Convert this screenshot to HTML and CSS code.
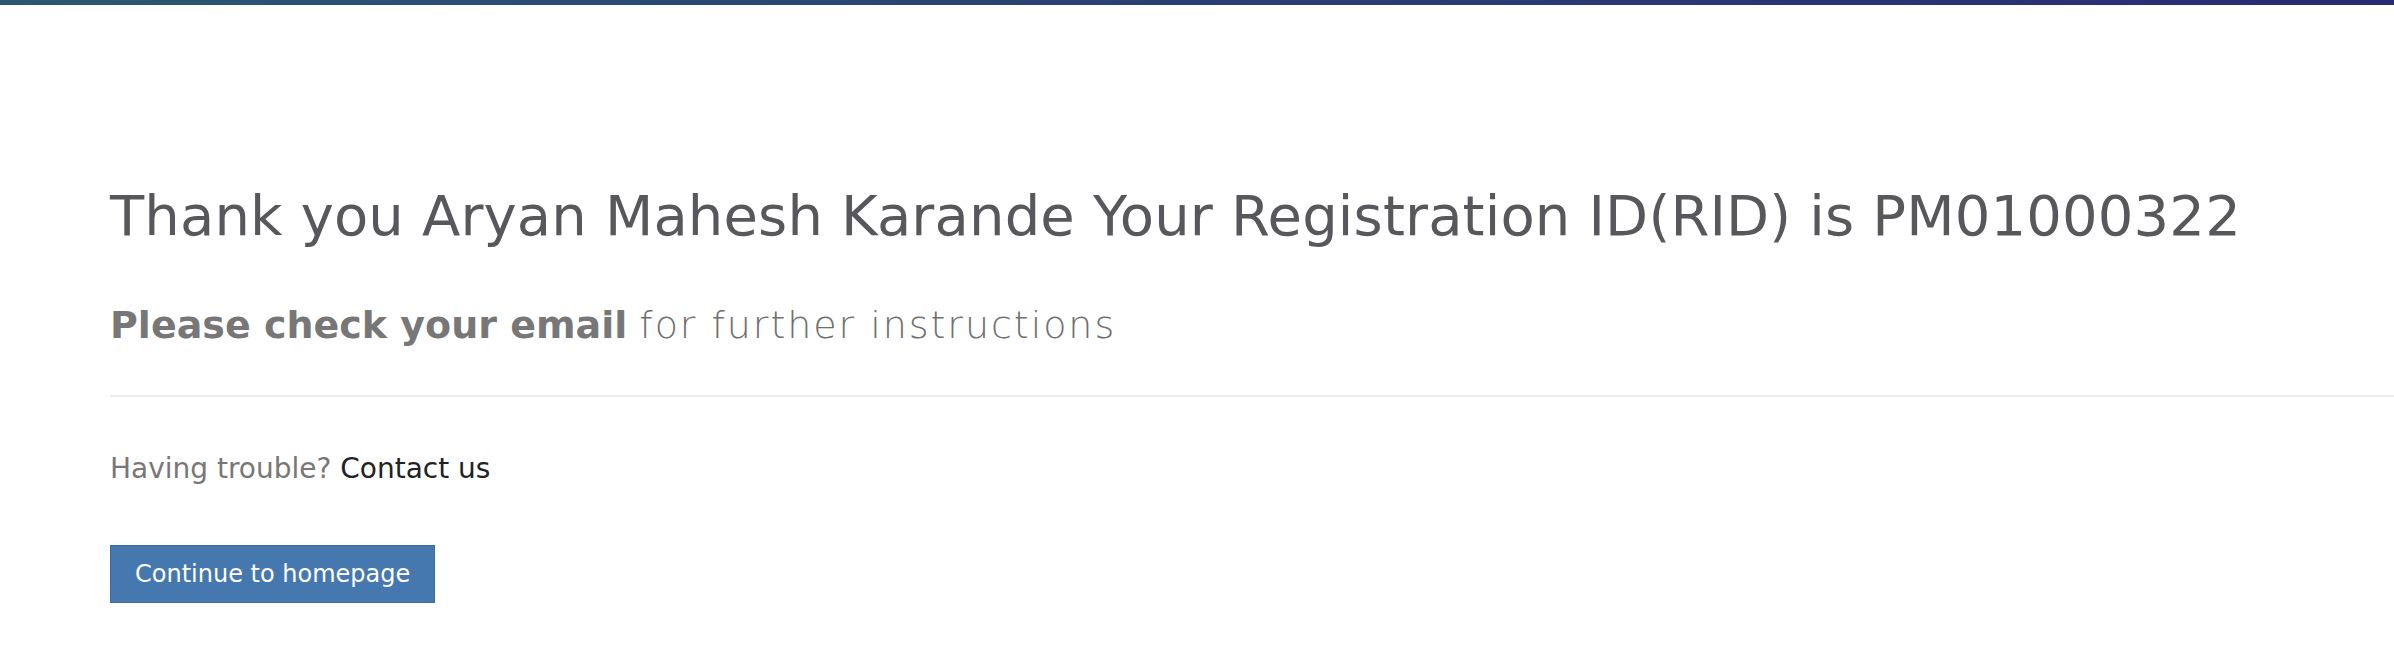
FILE: index.html
```html
<!DOCTYPE html>
<html lang="en">
<head>
<meta charset="utf-8">
<title>Registration complete</title>
<link rel="stylesheet" href="styles.css">
</head>
<body>
<div class="top-bar"></div>
<main class="content">
  <h1 class="title">Thank you Aryan Mahesh Karande Your Registration ID(RID) is PM01000322</h1>
  <p class="subtitle"><strong class="subtitle-strong">Please check your email</strong> <span class="subtitle-light">for further instructions</span></p>
  <hr class="divider">
  <p class="help">Having trouble? <a class="help-link" href="#">Contact us</a></p>
  <a class="btn-primary" href="#">Continue to homepage</a>
</main>
</body>
</html>
```
FILE: styles.css
```css
html, body {
  margin: 0;
  padding: 0;
  background: #ffffff;
}
body {
  font-family: "DejaVu Sans", "Liberation Sans", sans-serif;
  overflow: hidden;
}
.top-bar {
  height: 5px;
  background: linear-gradient(to right, #2b5772, #2a3f73 50%, #292c74);
}
.content {
  padding: 180px 0 0 110px;
  display: flex;
  flex-direction: column;
  align-items: flex-start;
}
.title {
  margin: 0;
  font-size: 56px;
  line-height: 62px;
  font-weight: 400;
  letter-spacing: 0.15px;
  color: #58585c;
  white-space: nowrap;
}
.subtitle {
  margin: 57px 0 0;
  font-size: 38px;
  line-height: 42px;
  color: #777777;
  white-space: nowrap;
}
.subtitle-strong {
  font-weight: 700;
}
.subtitle-light {
  font-weight: 300;
  letter-spacing: 1.95px;
  color: #707070;
}
.divider {
  align-self: stretch;
  margin: 49px 0 0;
  border: 0;
  height: 2px;
  background: #eeeeee;
}
.help {
  margin: 56px 0 0;
  font-size: 28px;
  line-height: 32px;
  color: #777777;
}
.help-link {
  color: #222222;
  text-decoration: none;
}
.btn-primary {
  margin-top: 60px;
  display: inline-block;
  padding: 14px 24px;
  border: 1px solid #3d6a9f;
  background: #4678b0;
  color: #ffffff;
  font-size: 24px;
  line-height: 28px;
  text-decoration: none;
}
```
